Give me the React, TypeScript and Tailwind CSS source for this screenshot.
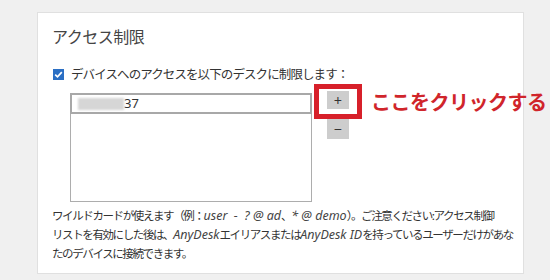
import React from "react";

const jp = '"Noto Sans CJK JP", "Noto Sans", sans-serif';
const lat = '"Noto Sans", "Noto Sans CJK JP", sans-serif';

function L({ children }: { children: React.ReactNode }) {
  return (
    <i className="text-[12.5px] tracking-[0px] text-[#444]" style={{ fontFamily: lat }}>
      {children}
    </i>
  );
}

export default function App() {
  return (
    <div
      className="w-[550px] h-[280px] bg-[#f0f0f0] pt-[12px] pl-[37px] overflow-hidden"
      style={{ fontFamily: jp }}
    >
      <div className="relative w-[487px] h-[262px] bg-white border border-[#e0e0e0] pt-[11px] pl-[14px]">
        <div className="h-[24px] leading-[24px] text-[16px] text-[#444] tracking-[-0.5px]">
          アクセス制限
        </div>
        <div className="mt-[17px] h-[18px] flex items-center gap-[7px]">
          <div className="w-[11px] h-[11px] bg-[#2b6fc4] flex items-center justify-center ml-[1px]">
            <svg width="9" height="9" viewBox="0 0 9 9">
              <path d="M1.2 4.6 L3.5 6.8 L7.8 2.2" stroke="white" strokeWidth="1.7" fill="none" />
            </svg>
          </div>
          <span className="text-[12.5px] text-[#333] tracking-[-0.9px]">
            デバイスへのアクセスを以下のデスクに制限します：
          </span>
        </div>
        <div className="mt-[8px] flex items-start pl-[18px]">
          <div className="mt-[2px] w-[242px] h-[109px] border border-[#adadad]">
            <div className="h-[21px] border-2 border-[#a8a8a8] -m-[1px] flex items-center pl-[6px]">
              <div className="w-[46px] h-[12px] bg-[#d6d6d6] blur-[1px]" />
              <span className="text-[13px] text-[#333] leading-none" style={{ fontFamily: lat }}>
                37
              </span>
            </div>
          </div>
          <div className="relative ml-[15px] flex flex-col">
            <div className="w-[22px] h-[18px] bg-[#cdcdcd] flex items-center justify-center text-[14px] text-[#333] leading-none">
              +
            </div>
            <div className="mt-[10px] w-[22px] h-[20px] bg-[#cdcdcd] flex items-center justify-center text-[14px] text-[#333] leading-none">
              −
            </div>
            <div className="absolute left-[-13px] top-[-7px] w-[48px] h-[35px] border-[5px] border-[#d7202a]" />
            <div className="absolute left-[44px] top-[-1px] whitespace-nowrap text-[20px] font-bold text-[#d0252b] leading-[24px] tracking-[-0.5px]">
              ここをクリックする
            </div>
          </div>
        </div>
        <div className="mt-[4px] text-[11.5px] leading-[18px] text-[#333] tracking-[-1.4px] whitespace-nowrap">
          <div>
            ワイルドカードが使えます（例：<L>user&nbsp; -&nbsp; ? @ ad</L>、<L>* @ demo</L>）。ご注意ください:アクセス制御
          </div>
          <div>
            リストを有効にした後は、<L>AnyDesk</L>エイリアスまたは<L>AnyDesk ID</L>を持っているユーザーだけがあな
          </div>
          <div>たのデバイスに接続できます。</div>
        </div>
      </div>
    </div>
  );
}
